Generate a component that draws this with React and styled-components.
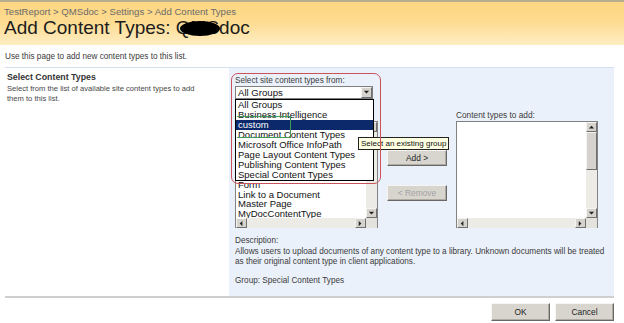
import React from 'react'
import styled, { createGlobalStyle } from 'styled-components'

const GlobalStyle = createGlobalStyle`
  html, body {
    margin: 0;
    padding: 0;
    background: #fff;
  }
  body {
    font-family: 'Liberation Sans', Arial, sans-serif;
  }
`

const availableTypes = [
  'Basic Page',
  'Contact',
  'Discussion',
  'Document',
  'Dublin Core Columns',
  'Event',
  'Far East Contact',
  'Folder',
  'Form',
  'Link to a Document',
  'Master Page',
  'MyDocContentType'
]

const groups = [
  'All Groups',
  'Business Intelligence',
  'custom',
  'Document Content Types',
  'Microsoft Office InfoPath',
  'Page Layout Content Types',
  'Publishing Content Types',
  'Special Content Types'
]

const Arrow = ({ dir }) => {
  const pts = {
    up: '1,5 4,2 7,5',
    down: '1,2 4,5 7,2',
    left: '5,1 2,4 5,7',
    right: '2,1 5,4 2,7'
  }
  return (
    <svg width='7' height='7' viewBox='0 0 8 8'>
      <polygon points={pts[dir]} fill='#222' />
    </svg>
  )
}

const App = () => {
  return (
    <Page>
      <GlobalStyle />
      <TitleArea>
        <Breadcrumb>TestReport &gt; QMSdoc &gt; Settings &gt; Add Content Types</Breadcrumb>
        <PageTitle>
          Add Content Types:{' '}
          <Redacted>
            QMS
            <Blob />
          </Redacted>
          doc
        </PageTitle>
      </TitleArea>

      <Intro>Use this page to add new content types to this list.</Intro>
      <TopRule />

      <Section>
        <SectionInfo>
          <SectionTitle>Select Content Types</SectionTitle>
          <SectionText>
            Select from the list of available site content types to add them to this list.
          </SectionText>
        </SectionInfo>

        <Panel>
          <Picker>
            <GroupPicker>
              <FieldLabel>Select site content types from:</FieldLabel>
              <SelectBox>
                <SelectValue>All Groups</SelectValue>
                <SelectButton>
                  <Arrow dir='down' />
                </SelectButton>
                <DropList>
                  {groups.map(g => (
                    <DropItem key={g} selected={g === 'custom'}>
                      {g}
                    </DropItem>
                  ))}
                </DropList>
                <FocusMark />
                <Tooltip>Select an existing group</Tooltip>
              </SelectBox>
              <Annotation />
            </GroupPicker>

            <ListLabel>Available Site Content Types:</ListLabel>
            <Spacer />
            <ListLabel>Content types to add:</ListLabel>

            <ListBox>
              <ListItems>
                {availableTypes.map(t => (
                  <ListItem key={t}>{t}</ListItem>
                ))}
              </ListItems>
              <VScroll>
                <ScrollButton>
                  <Arrow dir='up' />
                </ScrollButton>
                <Track />
                <ScrollButton>
                  <Arrow dir='down' />
                </ScrollButton>
              </VScroll>
              <HScroll>
                <ScrollButton>
                  <Arrow dir='left' />
                </ScrollButton>
                <Track />
                <ScrollButton>
                  <Arrow dir='right' />
                </ScrollButton>
              </HScroll>
              <Corner />
            </ListBox>

            <ButtonColumn>
              <Button>Add &gt;</Button>
              <Button disabled>&lt; Remove</Button>
            </ButtonColumn>

            <ListBox>
              <ListItems />
              <VScroll>
                <ScrollButton>
                  <Arrow dir='up' />
                </ScrollButton>
                <Track>
                  <Thumb />
                </Track>
                <ScrollButton>
                  <Arrow dir='down' />
                </ScrollButton>
              </VScroll>
              <HScroll>
                <ScrollButton>
                  <Arrow dir='left' />
                </ScrollButton>
                <Track />
                <ScrollButton>
                  <Arrow dir='right' />
                </ScrollButton>
              </HScroll>
              <Corner />
            </ListBox>
          </Picker>

          <Description>
            <div>Description:</div>
            <div>
              Allows users to upload documents of any content type to a library. Unknown documents will be treated
              as their original content type in client applications.
            </div>
            <GroupLine>Group: Special Content Types</GroupLine>
          </Description>
        </Panel>
      </Section>

      <BottomRule />

      <Footer>
        <Button wide>OK</Button>
        <Button wide>Cancel</Button>
      </Footer>
    </Page>
  )
}

const Page = styled.div`
  width: 624px;
  height: 323px;
  overflow: hidden;
  background: #fff;
`

const TitleArea = styled.header`
  height: 45px;
  box-sizing: border-box;
  border-top: 2px solid #b9ad90;
  padding: 4px 0 0 4px;
  background: linear-gradient(#fdd680 0%, #fddb90 45%, #feedc2 100%);
`

const Breadcrumb = styled.div`
  font-size: 9.6px;
  line-height: 11px;
  color: #6b6b6b;
`

const PageTitle = styled.h1`
  margin: 0;
  font-size: 19px;
  font-weight: normal;
  line-height: 21px;
  color: #1c1c1c;
`

const Redacted = styled.span`
  position: relative;
`

const Blob = styled.span`
  position: absolute;
  left: 4px;
  right: -1px;
  top: 4px;
  bottom: 2px;
  background: #000;
  border-radius: 50%;
`

const Intro = styled.div`
  padding: 7px 0 0 5px;
  height: 15px;
  font-size: 8.2px;
  line-height: 10px;
  color: #3a3a3a;
`

const TopRule = styled.div`
  margin: 0 10px 0 5px;
  height: 1px;
  background: #d5deee;
`

const Section = styled.div`
  display: flex;
  margin-left: 5px;
`

const SectionInfo = styled.div`
  width: 222px;
  padding: 3px 0 0 2px;
`

const SectionTitle = styled.div`
  font-size: 8.8px;
  font-weight: bold;
  line-height: 13px;
  color: #333;
`

const SectionText = styled.div`
  width: 203px;
  font-size: 7.6px;
  line-height: 10px;
  color: #474747;
`

const Panel = styled.div`
  width: 385px;
  height: 228px;
  box-sizing: border-box;
  padding: 7px 0 0 6px;
  background: #ebf1fa;
`

const Picker = styled.div`
  display: grid;
  grid-template-columns: 143px 60px 142px;
  column-gap: 9px;
`

const GroupPicker = styled.div`
  position: relative;
  grid-column: 1 / 4;
  height: 35px;
`

const FieldLabel = styled.div`
  font-size: 8.2px;
  line-height: 11px;
  color: #3c3c3c;
`

const SelectBox = styled.div`
  position: relative;
  display: flex;
  width: 138px;
  height: 13px;
  box-sizing: border-box;
  border: 1px solid #7f7f7f;
  background: #fff;
`

const SelectValue = styled.div`
  flex: 1;
  padding-left: 2px;
  font-size: 9.6px;
  line-height: 11px;
  color: #111;
`

const SelectButton = styled.div`
  display: flex;
  align-items: center;
  justify-content: center;
  width: 11px;
  box-sizing: border-box;
  background: #d6d3ce;
  border: 1px solid;
  border-color: #f5f4f1 #707070 #707070 #f5f4f1;
`

const DropList = styled.div`
  position: absolute;
  z-index: 3;
  top: 12px;
  left: -1px;
  width: 139px;
  box-sizing: border-box;
  border: 1px solid #000;
  background: #fff;
`

const DropItem = styled.div`
  height: 10px;
  padding-left: 2px;
  font-size: 9.5px;
  line-height: 10px;
  white-space: nowrap;
  color: ${props => (props.selected ? '#fff' : '#111')};
  background: ${props => (props.selected ? '#0c2a6b' : 'transparent')};
`

const FocusMark = styled.div`
  position: absolute;
  z-index: 4;
  top: 29px;
  left: 1px;
  width: 53px;
  height: 20px;
  border: 1px solid #3f9a58;
  border-left: none;
  pointer-events: none;
`

const Tooltip = styled.div`
  position: absolute;
  z-index: 5;
  top: 50px;
  left: 122px;
  padding: 0 2px;
  height: 11px;
  border: 1px solid #222;
  background: #ffffe1;
  font-size: 8px;
  line-height: 11px;
  white-space: nowrap;
  color: #111;
`

const Annotation = styled.div`
  position: absolute;
  z-index: 6;
  top: -2px;
  left: -4px;
  width: 148px;
  height: 109px;
  border: 1px solid #c9525c;
  border-radius: 7px;
  pointer-events: none;
`

const ListLabel = styled.div`
  height: 10px;
  padding-top: 1px;
  font-size: 8.3px;
  line-height: 9px;
  color: #3c3c3c;
`

const Spacer = styled.div``

const ListBox = styled.div`
  display: grid;
  grid-template-columns: 1fr 11px;
  grid-template-rows: 96px 10px;
  height: 107px;
  box-sizing: border-box;
  border: 1px solid #828282;
  border-bottom: none;
  background: #fff;
`

const ListItems = styled.div`
  display: flex;
  flex-direction: column;
  justify-content: flex-end;
  overflow: hidden;
  padding-left: 2px;
`

const ListItem = styled.div`
  flex-shrink: 0;
  height: 9.4px;
  font-size: 9.5px;
  line-height: 9.4px;
  white-space: nowrap;
  color: #111;
`

const VScroll = styled.div`
  display: flex;
  flex-direction: column;
`

const HScroll = styled.div`
  display: flex;
`

const ScrollButton = styled.div`
  display: flex;
  align-items: center;
  justify-content: center;
  flex-shrink: 0;
  width: 11px;
  height: 10px;
  box-sizing: border-box;
  background: #d6d3ce;
  border: 1px solid;
  border-color: #f5f4f1 #6f6f6f #6f6f6f #f5f4f1;
`

const Track = styled.div`
  flex: 1;
  display: flex;
  flex-direction: column;
  background: #ecebe6;
`

const Thumb = styled.div`
  height: 38px;
  box-sizing: border-box;
  background: #d6d3ce;
  border: 1px solid;
  border-color: #f5f4f1 #6f6f6f #6f6f6f #f5f4f1;
`

const Corner = styled.div`
  background: #e4e2dc;
`

const ButtonColumn = styled.div`
  display: flex;
  flex-direction: column;
  gap: 19px;
  padding-top: 29px;
`

const Button = styled.button`
  width: ${props => (props.wide ? '59px' : '60px')};
  height: ${props => (props.wide ? '18px' : '16px')};
  padding: 0;
  box-sizing: border-box;
  font-family: 'Liberation Sans', Arial, sans-serif;
  font-size: 8.4px;
  color: ${props => (props.disabled ? '#a3a3a3' : '#1e1e1e')};
  background: #d8d5cf;
  border: 1px solid;
  border-color: #f6f5f2 #6a6864 #6a6864 #f6f5f2;
  box-shadow: inset -1px -1px 0 #aeaba5;
`

const Description = styled.div`
  width: 378px;
  padding-top: 8px;
  font-size: 8.2px;
  line-height: 10.5px;
  color: #3a3a3a;
`

const GroupLine = styled.div`
  margin-top: 8px;
`

const BottomRule = styled.div`
  margin: 0 10px 0 5px;
  height: 2px;
  background: #cfcfcf;
`

const Footer = styled.div`
  display: flex;
  justify-content: flex-end;
  gap: 5px;
  padding: 5px 10px 0 0;
`

export default App
